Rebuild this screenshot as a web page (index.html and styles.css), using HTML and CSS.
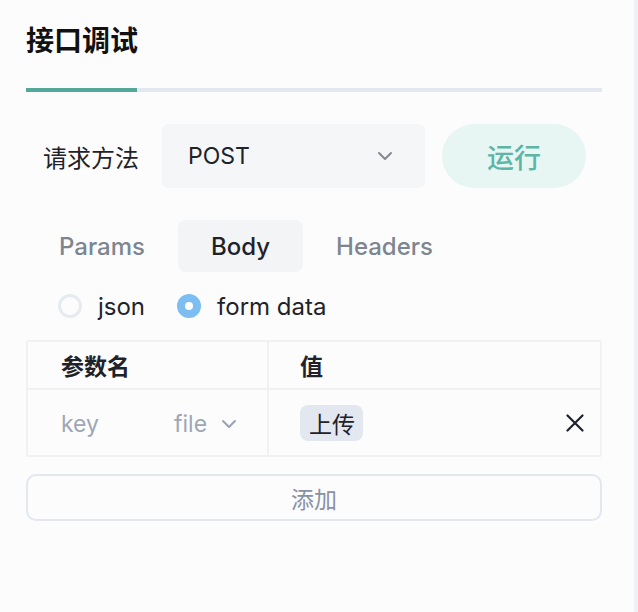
FILE: index.html
```html
<!DOCTYPE html>
<html lang="zh">
<head>
<meta charset="utf-8">
<title>接口调试</title>
<link rel="stylesheet" href="styles.css">
</head>
<body>
<div class="page">
  <div class="panel">
    <div class="title">接口调试</div>
    <div class="tabline"><div class="tabline-active"></div></div>

    <div class="method-row">
      <div class="label">请求方法</div>
      <div class="select">
        <span class="select-value">POST</span>
        <svg class="chev" width="16" height="10" viewBox="0 0 16 10"><path d="M2 2 L8 8 L14 2" fill="none" stroke="#86898f" stroke-width="2" stroke-linecap="round" stroke-linejoin="round"/></svg>
      </div>
      <div class="run">运行</div>
    </div>

    <div class="tabs">
      <div class="tab">Params</div>
      <div class="tab active">Body</div>
      <div class="tab">Headers</div>
    </div>

    <div class="radios">
      <div class="radio"><span class="dot"></span><span>json</span></div>
      <div class="radio on"><span class="dot"></span><span>form data</span></div>
    </div>

    <div class="table">
      <div class="row head">
        <div class="cell c1">参数名</div>
        <div class="cell c2">值</div>
      </div>
      <div class="row body">
        <div class="cell c1">
          <span class="ph key">key</span>
          <span class="ph type">file</span>
          <svg class="chev2" width="16" height="10" viewBox="0 0 16 10"><path d="M2 2 L8 8 L14 2" fill="none" stroke="#9aa3b5" stroke-width="2" stroke-linecap="round" stroke-linejoin="round"/></svg>
        </div>
        <div class="cell c2">
          <span class="tag">上传</span>
          <svg class="close" width="18" height="18" viewBox="0 0 18 18"><path d="M1.5 1.5 L16.5 16.5 M16.5 1.5 L1.5 16.5" fill="none" stroke="#1f2329" stroke-width="2.2" stroke-linecap="round"/></svg>
        </div>
      </div>
    </div>

    <div class="add">添加</div>
  </div>
  <div class="edge"></div>
</div>
</body>
</html>
```
FILE: styles.css
```css
* { box-sizing: border-box; }
html, body { margin: 0; padding: 0; }
body {
  background: #fcfcfd;
  font-family: Inter, "Noto Sans CJK SC", "Noto Sans", sans-serif;
  color: #1f2329;
}
.page {
  display: flex;
  width: 638px;
  height: 612px;
}
.panel {
  width: 634px;
  padding: 0 32px 0 26px;
}
.edge {
  width: 4px;
  background: #eff1f4;
}
.title {
  height: 78px;
  margin-bottom: 10px;
  display: flex;
  align-items: center;
  font-size: 28px;
  font-weight: 700;
  color: #111;
}
.tabline {
  height: 4px;
  background: #e3e7ef;
}
.tabline-active {
  width: 111px;
  height: 4px;
  background: #52a89a;
}
.method-row {
  margin-top: 32px;
  height: 64px;
  display: flex;
  align-items: center;
}
.label {
  margin-left: 17px;
  width: 119px;
  font-size: 24px;
  color: #1f2329;
}
.select {
  width: 263px;
  height: 64px;
  background: #f5f6f8;
  border-radius: 6px;
  display: flex;
  align-items: center;
  justify-content: space-between;
  padding: 0 32px 0 26px;
}
.select-value { font-size: 23px; color: #1f2329; }
.run {
  margin-left: 17px;
  width: 144px;
  height: 64px;
  border-radius: 32px;
  background: #e7f5f3;
  color: #5cb5a6;
  font-size: 27px;
  font-weight: 500;
  display: flex;
  align-items: center;
  justify-content: center;
}
.tabs {
  margin-top: 32px;
  display: flex;
  height: 52px;
}
.tab {
  padding: 0 33px;
  height: 52px;
  display: flex;
  align-items: center;
  font-size: 24px;
  font-weight: 500;
  color: #7d8590;
  border-radius: 8px;
}
.tab.active {
  background: #f3f4f6;
  color: #1f2329;
}
.radios {
  margin-top: 12px;
  height: 44px;
  display: flex;
  align-items: center;
  padding-left: 32px;
  font-size: 24px;
}
.radio {
  display: flex;
  align-items: center;
  gap: 16px;
  margin-right: 32px;
}
.dot {
  width: 24px;
  height: 24px;
  border-radius: 50%;
  border: 3px solid #e6eaf1;
  background: #fcfcfd;
}
.radio.on .dot {
  border: 8px solid #7cbdf2;
  background: #fff;
}
.table {
  margin-top: 12px;
  border: 2px solid #eff1f3;
  border-radius: 2px;
}
.row {
  display: flex;
}
.row.head { height: 48px; border-bottom: 2px solid #eff1f3; }
.row.body { height: 65px; }
.cell {
  display: flex;
  align-items: center;
}
.c1 {
  width: 241px;
  border-right: 2px solid #eff1f3;
  padding-left: 33px;
}
.c2 {
  flex: 1;
  padding-left: 31px;
  padding-right: 16px;
}
.head .cell {
  font-size: 23px;
  font-weight: 700;
  color: #1f2329;
}
.ph {
  font-size: 23px;
  color: #9ea6b6;
  padding-top: 3px;
}
.key { width: 113px; }
.chev2 { margin-left: 14px; margin-top: 2px; }
.tag {
  background: #e2e7f0;
  border-radius: 8px;
  height: 36px;
  padding: 0 8px 0 9px;
  display: flex;
  align-items: center;
  font-size: 23px;
  color: #1f2329;
}
.close { margin-left: auto; }
.add {
  margin-top: 17px;
  height: 47px;
  border: 2px solid #e3e7f0;
  border-radius: 10px;
  display: flex;
  align-items: center;
  justify-content: center;
  font-size: 23px;
  color: #8892a4;
}
```
